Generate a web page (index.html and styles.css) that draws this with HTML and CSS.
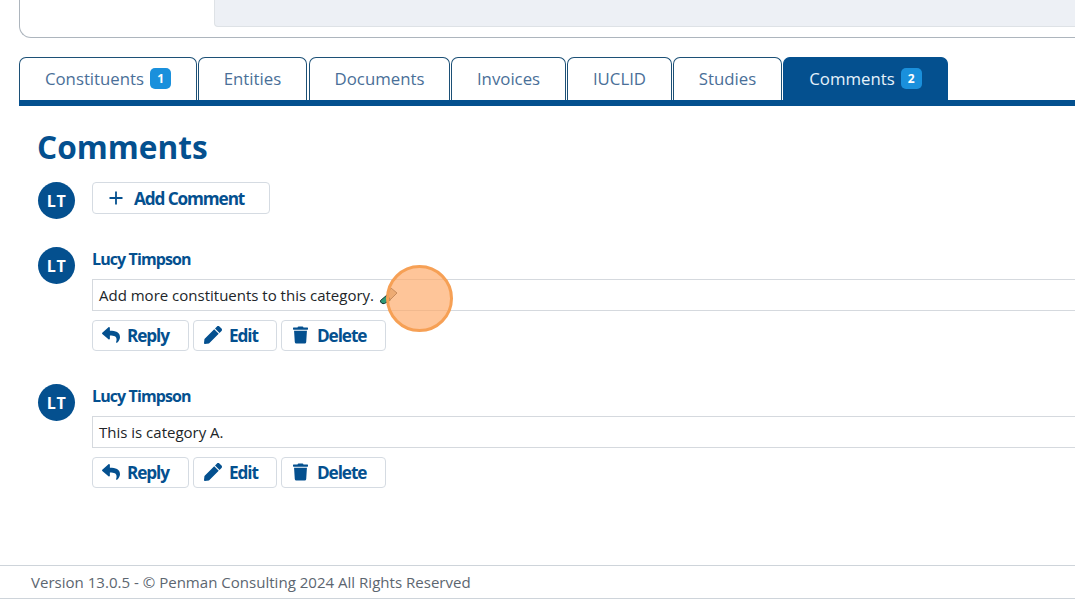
FILE: index.html
```html
<!DOCTYPE html>
<html lang="en">
<head>
<meta charset="utf-8">
<title>Comments</title>
<link rel="stylesheet" href="styles.css">
</head>
<body>
<div class="page">
  <div class="top-card"><div class="top-side"></div><div class="top-panel"></div></div>
  <nav class="tabs">
    <a class="tab t1">Constituents <span class="badge">1</span></a>
    <a class="tab t2">Entities</a>
    <a class="tab t3">Documents</a>
    <a class="tab t4">Invoices</a>
    <a class="tab t5">IUCLID</a>
    <a class="tab t6">Studies</a>
    <a class="tab t7 active">Comments <span class="badge">2</span></a>
  </nav>
  <main class="content">
    <h1 class="title">Comments</h1>
    <div class="row add-row">
      <div class="avatar">LT</div>
      <button class="btn add"><svg class="ic-plus" viewBox="0 0 14 14"><path d="M7 .5v13M.5 7h13" fill="none" stroke="currentColor" stroke-width="1.8"/></svg>Add Comment</button>
    </div>
    <div class="row comment">
      <div class="avatar">LT</div>
      <div class="body">
        <div class="name">Lucy Timpson</div>
        <div class="text">Add more constituents to this category.</div>
        <div class="actions">
          <button class="btn reply"><svg class="ic" viewBox="0 0 512 512"><path fill="currentColor" d="M8.3 189.800L184.300 37.800C199.700 24.500 224 35.300 224 56v80.100C384.600 137.900 512 170.100 512 322.300c0 61.400-39.600 122.300-83.300 154.100-13.700 9.900-33.100-2.500-28.100-18.600 45.300-144.900-21.500-183.400-176.600-185.600V360c0 20.700-24.300 31.500-39.700 18.200l-176-152c-11.100-9.600-11.100-26.800 0-36.400z"/></svg>Reply</button>
          <button class="btn edit"><svg class="ic" viewBox="0 0 512 512"><path fill="currentColor" d="M290.700 93.200l128 128L140.800 499.100l-114.100 12.600C11.400 513.400-1.500 500.500.2 485.200l12.700-114.200L290.700 93.200zm207.200-19.100L437.800 14.100c-18.700-18.700-49.100-18.700-67.900 0l-56.500 56.500 128 128 56.500-56.500c18.800-18.800 18.800-49.100 0-67.900z"/></svg>Edit</button>
          <button class="btn del"><svg class="ic trash" viewBox="0 0 448 512"><path fill="currentColor" d="M432 32H312l-9.400-18.700A24 24 0 0 0 281.100 0H166.800a23.700 23.700 0 0 0-21.400 13.300L136 32H16A16 16 0 0 0 0 48v32a16 16 0 0 0 16 16h416a16 16 0 0 0 16-16V48a16 16 0 0 0-16-16zM53.200 467a48 48 0 0 0 47.900 45h245.800a48 48 0 0 0 47.900-45L416 128H32z"/></svg>Delete</button>
        </div>
      </div>
    </div>
    <div class="row comment">
      <div class="avatar">LT</div>
      <div class="body">
        <div class="name">Lucy Timpson</div>
        <div class="text">This is category A.</div>
        <div class="actions">
          <button class="btn reply"><svg class="ic" viewBox="0 0 512 512"><path fill="currentColor" d="M8.300 189.800L184.300 37.800C199.700 24.500 224 35.300 224 56v80.100C384.600 137.900 512 170.100 512 322.300c0 61.400-39.600 122.300-83.300 154.100-13.700 9.900-33.100-2.500-28.100-18.600 45.300-144.900-21.500-183.400-176.600-185.600V360c0 20.700-24.300 31.500-39.700 18.200l-176-152c-11.100-9.600-11.100-26.800 0-36.400z"/></svg>Reply</button>
          <button class="btn edit"><svg class="ic" viewBox="0 0 512 512"><path fill="currentColor" d="M290.700 93.200l128 128L140.800 499.100l-114.100 12.600C11.400 513.400-1.500 500.500.2 485.200l12.700-114.200L290.700 93.200zm207.200-19.100L437.800 14.100c-18.700-18.700-49.100-18.700-67.900 0l-56.500 56.500 128 128 56.500-56.500c18.800-18.800 18.800-49.100 0-67.900z"/></svg>Edit</button>
          <button class="btn del"><svg class="ic trash" viewBox="0 0 448 512"><path fill="currentColor" d="M432 32H312l-9.400-18.700A24 24 0 0 0 281.100 0H166.800a23.700 23.700 0 0 0-21.400 13.300L136 32H16A16 16 0 0 0 0 48v32a16 16 0 0 0 16 16h416a16 16 0 0 0 16-16V48a16 16 0 0 0-16-16zM53.200 467a48 48 0 0 0 47.900 45h245.800a48 48 0 0 0 47.900-45L416 128H32z"/></svg>Delete</button>
        </div>
      </div>
    </div>
  </main>
  <footer class="footer">Version 13.0.5 - © Penman Consulting 2024 All Rights Reserved</footer>
  <svg class="cursor-pen" viewBox="0 0 20 20"><path d="M1.500 14.500L8 9l3.500 5-6 3.500c-2 .8-4.500-1-4-3z" fill="#2f9a78" stroke="#17352d" stroke-width="1"/><path d="M8 9l4-7 6 5-6.500 6.500z" fill="#c9ae8c" stroke="#5a5044" stroke-width="1"/></svg>
  <div class="highlight"></div>
</div>
</body>
</html>
```
FILE: styles.css
```css
* { box-sizing: border-box; }
html, body { margin: 0; padding: 0; background: #fff; }
body { font-family: "Open Sans", "Liberation Sans", sans-serif; overflow: hidden; }
.page { position: relative; width: 1075px; height: 601px; overflow: hidden; }

.top-card {
  display: flex;
  height: 38px;
  margin-left: 19px;
  border: 1px solid #adb5bd;
  border-top: 0;
  border-right: 0;
  border-radius: 0 0 0 12px;
}
.top-side { width: 194px; flex: none; }
.top-panel {
  flex: 1;
  height: 27px;
  background: #edf0f5;
  border: 1px solid #dee2e6;
  border-top: 0;
  border-right: 0;
  border-radius: 0 0 0 4px;
}

.tabs {
  display: flex;
  height: 49px;
  margin: 19px 0 0 19px;
  border-bottom: 6px solid #04508f;
}
.tab {
  display: flex;
  align-items: center;
  justify-content: center;
  gap: 6px;
  height: 43px;
  padding-bottom: 1px;
  border: 1px solid #1c5076;
  border-bottom: 0;
  border-radius: 7px 7px 0 0;
  font-size: 16.8px;
  color: #4a6f98;
  white-space: nowrap;
}
.t1 { width: 178px; margin-right: 1px; }
.t2 { width: 109px; margin-right: 2px; }
.t3 { width: 141px; margin-right: 1px; }
.t4 { width: 115px; margin-right: 1px; }
.t5 { width: 105px; margin-right: 1px; }
.t6 { width: 109px; margin-right: 1px; }
.t7 { width: 165px; }
.tab.active { background: #04508f; border-color: #04508f; color: #e6f2fb; }
.badge {
  display: inline-flex;
  align-items: center;
  justify-content: center;
  min-width: 21px;
  height: 21px;
  padding: 0 5px;
  border-radius: 5px;
  background: #1a90dc;
  color: #fff;
  font-size: 12px;
  font-weight: 700;
  line-height: 1;
}

.content { padding: 0 0 0 38px; }
.title {
  margin: 22px 0 0 -1px;
  font-size: 31.6px;
  line-height: 38px;
  font-weight: 700;
  color: #04508f;
}
.row { display: flex; gap: 17px; }
.add-row { margin-top: 16px; align-items: flex-start; }
.comment { margin-top: 28px; }
.comment + .comment { margin-top: 33px; }
.avatar {
  flex: none;
  width: 37px;
  height: 37px;
  border-radius: 50%;
  background: #04508f;
  color: #fff;
  font-size: 16px;
  font-weight: 700;
  letter-spacing: .5px;
  display: flex;
  align-items: center;
  justify-content: center;
}
.body { flex: 1; min-width: 0; }
.name {
  height: 24px;
  font-size: 16px;
  line-height: 24px;
  font-weight: 700;
  letter-spacing: -.9px;
  color: #04508f;
}
.text {
  height: 32px;
  margin-top: 8px;
  padding-left: 6px;
  border: 1px solid #d5d9de;
  border-right: 0;
  font-size: 15px;
  line-height: 30px;
  color: #212529;
}
.actions { display: flex; gap: 4px; margin-top: 8.5px; }
.btn {
  display: flex;
  align-items: center;
  height: 31.5px;
  padding: 0 0 0 9px;
  background: #fff;
  border: 1px solid #d5dbe2;
  border-radius: 4px;
  font-family: inherit;
  font-size: 17.2px;
  font-weight: 700;
  letter-spacing: -1.1px;
  color: #04508f;
}
.add { width: 178px; height: 32px; padding-left: 16px; gap: 11px; }
.ic-plus { width: 14px; height: 14px; }
.reply { width: 97px; }
.edit { width: 84px; padding-left: 10px; }
.del { width: 105px; padding-left: 11px; }
.ic { width: 18px; height: 18px; margin-right: 7px; }
.trash { width: 15px; height: 18px; margin-right: 9px; }

.footer {
  position: absolute;
  left: 0;
  right: 0;
  top: 565px;
  height: 34px;
  padding-left: 31px;
  border-top: 1px solid #ced4da;
  border-bottom: 1px solid #ced4da;
  font-size: 15.05px;
  line-height: 33px;
  color: #5c6670;
}
.cursor-pen { position: absolute; left: 379px; top: 286px; width: 20px; height: 20px; }
.highlight {
  position: absolute;
  left: 386px;
  top: 265px;
  width: 67px;
  height: 67px;
  border-radius: 50%;
  background: rgba(253, 170, 105, .68);
  border: 3px solid #f6a055;
}
```
